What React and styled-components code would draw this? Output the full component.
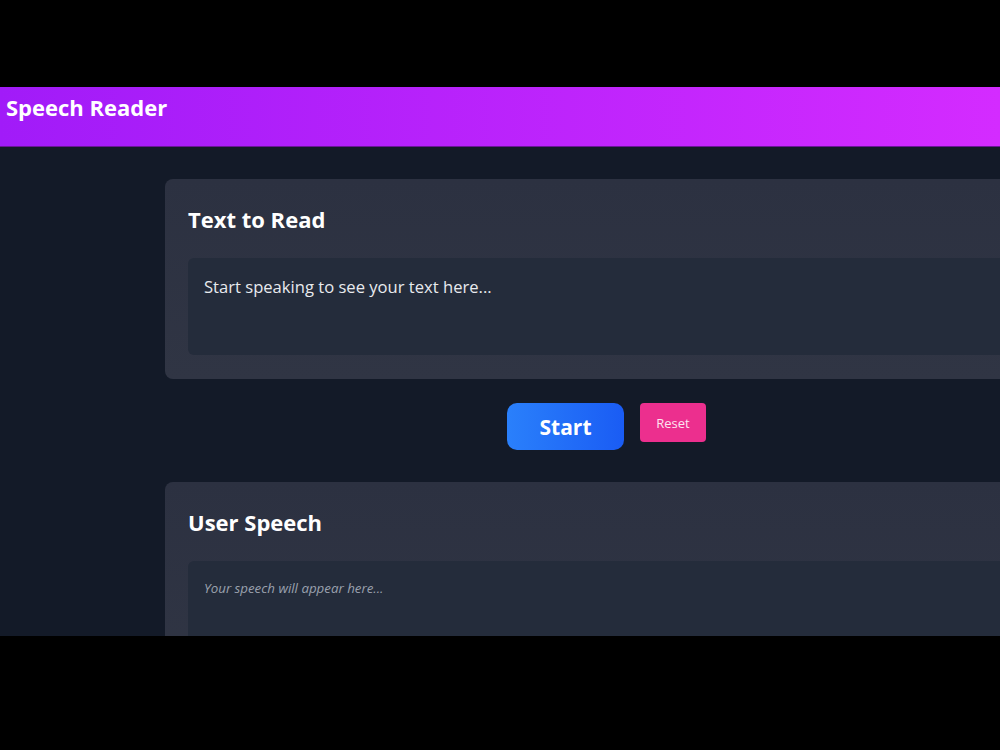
import React from "react";
import styled, { createGlobalStyle } from "styled-components";

const Global = createGlobalStyle`
  html, body { margin: 0; padding: 0; background: #000; }
  body { width: 1000px; height: 750px; overflow: hidden; font-family: "Open Sans", "Noto Sans", sans-serif; }
  * { box-sizing: border-box; }
`;

const Screen = styled.div`
  margin-top: 87px;
  width: 1000px;
  height: 549px;
  overflow: hidden;
  background: #131a28;
  display: flex;
  flex-direction: column;
`;

const Header = styled.header`
  flex: none;
  height: 60px;
  display: flex;
  align-items: center;
  padding: 0 6px 19px;
  background: linear-gradient(to right, #a11bf8, #d42bff);
  border-bottom: 1px solid #6a1596;
`;

const Title = styled.h1`
  margin: 0;
  color: #fff;
  font-size: 22px;
  line-height: 28px;
  font-weight: 700;
`;

const Main = styled.main`
  margin-left: 165px;
  width: 883px;
  flex: none;
  padding-top: 32px;
  display: flex;
  flex-direction: column;
`;

const Card = styled.section`
  background: linear-gradient(to bottom, #2c3141, #303544);
  border-radius: 8px;
  padding: 24px 23px;
`;

const CardTitle = styled.h2`
  margin: 0 0 23px;
  color: #fff;
  font-size: 22px;
  line-height: 32px;
  font-weight: 700;
`;

const TextBox = styled.div`
  min-height: 97px;
  border-radius: 6px;
  background: #242c3b;
  padding: 17px 16px;
  color: ${p => (p.$placeholder ? "#9aa1ae" : "#e8eaee")};
  font-size: ${p => (p.$placeholder ? "13.3px" : "16.6px")};
  font-style: ${p => (p.$placeholder ? "italic" : "normal")};
  line-height: ${p => (p.$placeholder ? "20px" : "24px")};
`;

const Controls = styled.div`
  display: flex;
  justify-content: center;
  align-items: flex-start;
  gap: 16px;
  margin: 24px 0 32px;
`;

const StartButton = styled.button`
  width: 117px;
  height: 47px;
  border: none;
  border-radius: 10px;
  background: linear-gradient(to right, #2a80fb, #1a5cf4);
  color: #fff;
  font-family: inherit;
  font-size: 21px;
  font-weight: 700;
  cursor: pointer;
`;

const ResetButton = styled.button`
  width: 66px;
  height: 39px;
  border: none;
  border-radius: 4px;
  background: #ec2f8e;
  color: #fde4f1;
  font-family: inherit;
  font-size: 13px;
  cursor: pointer;
`;

export default function App() {
  return (
    <>
      <Global />
      <Screen>
        <Header>
          <Title>Speech Reader</Title>
        </Header>
        <Main>
          <Card>
            <CardTitle>Text to Read</CardTitle>
            <TextBox>Start speaking to see your text here...</TextBox>
          </Card>
          <Controls>
            <StartButton>Start</StartButton>
            <ResetButton>Reset</ResetButton>
          </Controls>
          <Card>
            <CardTitle>User Speech</CardTitle>
            <TextBox $placeholder>Your speech will appear here...</TextBox>
          </Card>
        </Main>
      </Screen>
    </>
  );
}
